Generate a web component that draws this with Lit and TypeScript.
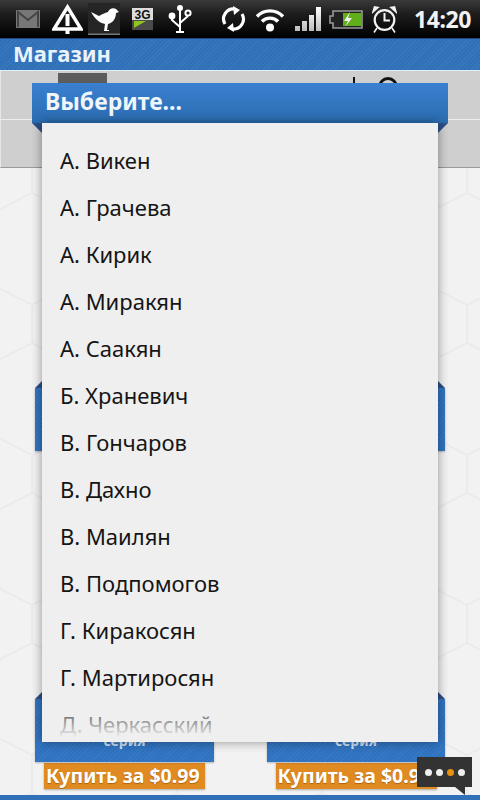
import { LitElement, html, css, unsafeCSS } from "lit";
import { customElement } from "lit/decorators.js";

const NAMES = ["А. Викен","А. Грачева","А. Кирик","А. Миракян","А. Саакян","Б. Храневич","В. Гончаров","В. Дахно","В. Маилян","В. Подпомогов","Г. Киракосян","Г. Мартиросян","Д. Черкасский"];

const HEX = unsafeCSS(encodeURIComponent(`<svg xmlns="http://www.w3.org/2000/svg" width="145" height="150"><g fill="none" stroke="#ebebeb" stroke-width="2"><path d="M0 0V38L72.5 75V113L0 150M72.5 113L145 150M145 0V38L72.5 75"/></g></svg>`));

@customElement("app-root")
export class AppRoot extends LitElement {
  static styles = css`
    :host { display: block; position: relative; width: 480px; height: 800px; overflow: hidden;
      font-family: "Noto Sans", "Open Sans", sans-serif; background: #f2f2f2; }
    .status { height: 38px; display: flex; align-items: center; box-sizing: border-box; padding-left: 16px;
      background: linear-gradient(#3a3a3a 0, #1e1e1e 35%, #000 100%); }
    .status svg { display: block; flex: none; }
    .warn { margin-left: 12px; }
    .bird { margin-left: 5px; }
    .g3 { margin-left: 12px; }
    .usb { margin-left: 15px; }
    .sync { margin-left: 29px; }
    .wifi { margin-left: 9px; }
    .sig { margin-left: 10px; }
    .bat { margin-left: 8px; }
    .alarm { margin-left: 9px; }
    .time { margin-left: 17px; color: #f2f2f2; font-size: 23px; font-weight: 700; line-height: 38px; letter-spacing: -0.4px; }
    .stripe { background-color: #2f70b8;
      background-image: repeating-linear-gradient(135deg, rgba(255,255,255,.05) 0 1px, transparent 1px 3px); }
    .appbar { height: 32px; box-sizing: border-box; padding-left: 13px; color: #eaf3fb; font-size: 22px; font-weight: 700;
      line-height: 28px; border-top: 1px solid #1c4a80; }
    .rows { border-top: 1px solid #dff0f6; }
    .row { height: 49px; box-sizing: border-box; background: #cfcfcf; border-left: 1px solid #e6e6e6; display: flex; align-items: flex-start;
      border-bottom: 1px solid #eee; padding-left: 57px; }
    .row.r2 { height: 48px; border-bottom: 1px solid #9a9a9a; }
    .thumb { width: 49px; height: 12px; margin-top: 2px; background: #5c5c5c; }
    .bar { width: 2px; height: 10px; margin: 6px 0 0 246px; background: #111; }
    .ring { width: 14px; height: 14px; margin: 6px 0 0 23px; border: 3px solid #111; border-radius: 50%; }
    .shop { height: 632px; display: grid; grid-template-columns: 179px 178px; column-gap: 53px; padding: 220px 0 0 35px; box-sizing: border-box;
      background-image: url("data:image/svg+xml,${HEX}"); background-position: 32px -13px; grid-auto-rows: 311px; }
    .cell { display: flex; flex-direction: column; align-items: center; }
    .card { position: relative; width: 100%; height: 63px; flex: none; box-sizing: border-box; text-align: center; padding-top: 32px; box-shadow: 0 1px 2px rgba(0,0,0,.25);
      background-color: #2e72c0; color: #cfe2f5; font-size: 14px; font-weight: 700; line-height: 20px; }
    .card::before, .card::after { content: ""; position: absolute; top: -8px; border-bottom: 8px solid #2d4f86; }
    .card::before { left: 0; border-left: 8px solid transparent; }
    .card::after { right: 0; border-right: 8px solid transparent; }
    .buy { margin-top: 1px; width: 161px; height: 26px; box-sizing: border-box; padding-left: 2px; background: #e08a22; color: #fff; font-size: 19.5px; font-weight: 700; line-height: 26px; white-space: nowrap; overflow: hidden; box-shadow: 0 1px 2px rgba(0,0,0,.3); text-shadow: 0 1px 1px rgba(120,60,0,.5); }
    .foot { position: absolute; left: 0; right: 0; top: 795px; height: 5px; background: #2f70b8; }
    .dialog { position: absolute; left: 32px; top: 83px; width: 416px; height: 659px; display: flex; flex-direction: column; align-items: center; }
    .title { position: relative; width: 416px; height: 40px; flex: none; box-sizing: border-box; padding-left: 13px; background: linear-gradient(#3a80d0, #2a6cb0); color: #f1f6fb;
      font-size: 23px; font-weight: 700; line-height: 36px; }
    .title::before, .title::after { content: ""; position: absolute; top: 40px; border-top: 10px solid #2d4f86; }
    .title::before { left: 0; border-left: 10px solid transparent; }
    .title::after { right: 0; border-right: 10px solid transparent; }
    .list { position: relative; width: 396px; flex: 1; min-height: 0; overflow: hidden; background: #efefef; box-shadow: 0 0 10px rgba(0,0,0,.4);
      padding-top: 14px; box-sizing: border-box; }
    .list::after { content: ""; position: absolute; left: 0; right: 0; bottom: 0; height: 44px; background: linear-gradient(rgba(239,239,239,0), #efefef 90%); }
    .item { height: 47px; padding-left: 18px; color: #151515; font-size: 22px; line-height: 47px; white-space: nowrap; }
    .bubble { position: absolute; left: 417px; top: 757px; width: 55px; height: 30px; background: #333; display: flex; align-items: center; gap: 4px; box-sizing: border-box; padding: 1px 0 0 8px; }
    .bubble::after { content: ""; position: absolute; left: 38px; top: 30px; border-top: 8px solid #333; border-left: 10px solid transparent; }
    .dot { width: 7px; height: 7px; border-radius: 50%; background: #eee; flex: none; }
    .dot.on { background: #e8900f; }
  `;

  private icons() {
    return html`
      <svg class="gm" width="24" height="18" viewBox="0 0 24 18"><rect width="24" height="18" fill="#777"/><path d="M2 17V2L12 10L22 2V17" fill="none" stroke="#444" stroke-width="2"/></svg>
      <svg class="warn" width="31" height="30" viewBox="0 0 31 30"><path d="M15.5 3L29 25H2Z" fill="none" stroke="#fff" stroke-width="3.4"/><rect x="13.5" y="10" width="4" height="12" fill="#fff"/><rect x="13.5" y="25" width="4" height="5" fill="#fff"/></svg>
      <svg class="bird" width="32" height="32" viewBox="0 0 32 32"><rect width="32" height="32" fill="#252525"/><rect y="30.5" width="32" height="1.5" fill="#777"/><path d="M3 9L11 13C14 11 17 10 20 9C21 6 25 4 28 6L31 9L28 10C28 15 25 20 20 21L19 27H21V28H16L17 21C13 20 8 18 3 9Z" fill="#fff"/></svg>
      <svg class="g3" width="21" height="22" viewBox="0 0 21 22"><rect width="21" height="22" fill="#4a4a4a"/><rect width="21" height="12" fill="#ddd"/><text x="10.5" y="11" text-anchor="middle" font-family="Liberation Sans" font-size="12" font-weight="700" fill="#111">3G</text><path d="M2 20V13H14L2 20Z" fill="#8fc31f"/></svg>
      <svg class="usb" width="24" height="28" viewBox="0 0 24 28"><g fill="none" stroke="#fff" stroke-width="2"><path d="M12 2V27M12 22L4 15V12M12 18L20 11"/><circle cx="20" cy="8" r="2.6"/></g><circle cx="12" cy="3" r="3" fill="#fff"/><circle cx="4" cy="11" r="3.4" fill="#fff"/><rect x="8" y="26" width="8" height="2" fill="#fff"/></svg>
      <svg class="sync" width="25" height="26" viewBox="0 0 25 26"><g fill="none" stroke="#fff" stroke-width="3.2"><path d="M4 18A10 10 0 0 1 14 3"/><path d="M21 8A10 10 0 0 1 11 23"/></g><path d="M12 0L19 4L13 9ZM13 26L6 22L12 17Z" fill="#fff"/></svg>
      <svg class="wifi" width="30" height="25" viewBox="0 0 30 25"><g fill="none" stroke="#fff" stroke-width="3.4"><path d="M2 9.5C9 2 21 2 28 9.5"/><path d="M7 14.5C11 10 19 10 23 14.5"/></g><circle cx="15" cy="20.5" r="4" fill="#fff"/></svg>
      <svg class="sig" width="26" height="24" viewBox="0 0 26 24"><defs><linearGradient id="s" x1="0" x2="0" y1="0" y2="1"><stop offset="0" stop-color="#fff"/><stop offset="1" stop-color="#bbb"/></linearGradient></defs><path d="M0 19h5v5H0zM7 14h5v10H7zM14 8h5v16h-5zM21 0h5v24h-5z" fill="url(#s)"/></svg>
      <svg class="bat" width="34" height="19" viewBox="0 0 34 19"><path d="M4 1H33V18H4V13H1V6H4Z" fill="#222" stroke="#999" stroke-width="1.6"/><rect x="14" y="3" width="18" height="13" fill="#5fae1a"/><path d="M21 2L15 11H19L16 17L23 8H19Z" fill="#f4f4f4"/></svg>
      <svg class="alarm" width="25" height="27" viewBox="0 0 25 27"><circle cx="12.5" cy="14" r="9.8" fill="none" stroke="#f2f2f2" stroke-width="2.2"/><path d="M12.5 7V14.5H18" fill="none" stroke="#f2f2f2" stroke-width="2"/><path d="M1 6L6 1.5L2.5 1ZM24 6L19 1.5L22.5 1ZM5 22L2 26.5M20 22L23 26.5" fill="#f2f2f2" stroke="#f2f2f2" stroke-width="1.6"/></svg>
      <span class="time">14:20</span>`;
  }

  render() {
    const cell = () => html`<div class="cell"><div class="card stripe">серия</div><div class="buy">Купить за $0.99</div></div>`;
    return html`
      <div class="status">${this.icons()}</div>
      <div class="appbar stripe">Магазин</div>
      <div class="rows">
        <div class="row"><div class="thumb"></div><div class="bar"></div><div class="ring"></div></div>
        <div class="row r2"></div>
      </div>
      <div class="shop">${[0, 1, 2, 3].map(cell)}</div>
      <div class="foot"></div>
      <div class="dialog">
        <div class="title">Выберите...</div>
        <div class="list">${NAMES.map((n) => html`<div class="item">${n}</div>`)}</div>
      </div>
      <div class="bubble"><span class="dot"></span><span class="dot"></span><span class="dot on"></span><span class="dot"></span></div>
    `;
  }
}
